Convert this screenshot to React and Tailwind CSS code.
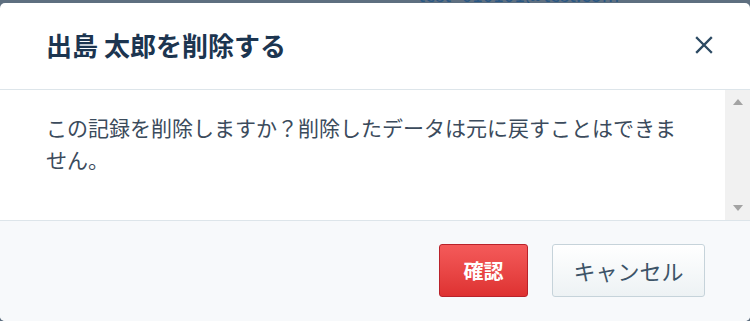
import React from "react";

const jp = { fontFamily: '"Noto Sans CJK JP", "Noto Sans", sans-serif' };

export default function App() {
    return (
        <div className="w-[750px] h-[321px] overflow-hidden bg-[#5e6f80]" style={jp}>
            {/* backdrop strip, page behind the modal */}
            <div className="h-[3px] overflow-hidden pl-[418px]">
                <div className="-mt-[15px] text-[19px] leading-[18px] text-[#2a5783]">test_010101@test.com</div>
            </div>

            <div className="h-[318px] bg-white rounded-[5px] overflow-hidden flex flex-col">
                {/* header */}
                <div className="h-[87px] flex items-center justify-between pl-[46px] pr-[37px] border-b border-[#dde5ea]">
                    <h2 className="text-[26px] font-bold text-[#1c3550] -mt-[3px]">出島 太郎を削除する</h2>
                    <button className="w-[18px] h-[18px] flex items-center justify-center text-[#2c4a63] -mt-[2px]">
                        <svg width="18" height="18" viewBox="0 0 18 18" fill="none" stroke="currentColor" strokeWidth="2.3" strokeLinecap="square">
                            <path d="M2 2 L16 16 M16 2 L2 16" />
                        </svg>
                    </button>
                </div>

                {/* body */}
                <div className="h-[130px] flex">
                    <div className="flex-1 pl-[46px] pt-[21px]">
                        <p className="max-w-[640px] text-[21px] leading-[32px] text-[#3b4b5c]">
                            この記録を削除しますか？削除したデータは元に戻すことはできません。
                        </p>
                    </div>
                    <div className="w-[25px] bg-[#f1f1f1] flex flex-col items-center justify-between py-[9px]">
                        <svg width="10" height="6" viewBox="0 0 10 6"><path d="M5 0 L10 6 L0 6 Z" fill="#a3a3a3" /></svg>
                        <svg width="10" height="6" viewBox="0 0 10 6"><path d="M0 0 L10 0 L5 6 Z" fill="#a3a3a3" /></svg>
                    </div>
                </div>

                {/* footer */}
                <div className="flex-1 bg-[#f7f9fb] border-t border-[#dde5ea] flex justify-end items-start gap-[24px] pt-[23px] pr-[45px]">
                    <button className="w-[89px] h-[53px] rounded-[3px] border border-[#b9222a] bg-gradient-to-b from-[#f45a5a] to-[#de3131] text-white text-[20px] font-bold">
                        確認
                    </button>
                    <button className="w-[153px] h-[53px] rounded-[3px] border border-[#c6d3da] bg-gradient-to-b from-white to-[#edf2f4] text-[#3d5468] text-[22px]">
                        キャンセル
                    </button>
                </div>
            </div>
        </div>
    );
}
